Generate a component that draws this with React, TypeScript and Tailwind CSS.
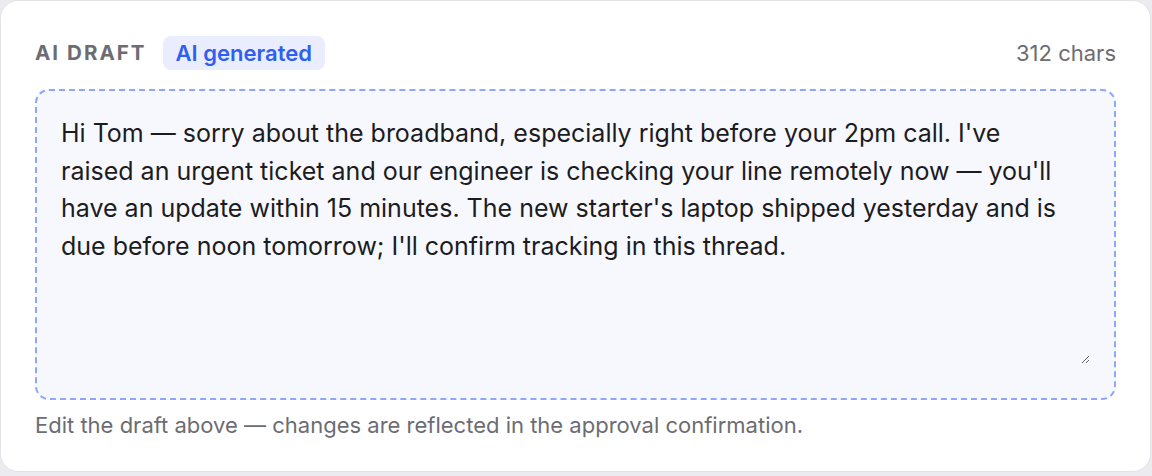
import React from "react";

const draft =
  "Hi Tom — sorry about the broadband, especially right before your 2pm call. I've raised an urgent ticket and our engineer is checking your line remotely now — you'll have an update within 15 minutes. The new starter's laptop shipped yesterday and is due before noon tomorrow; I'll confirm tracking in this thread.";

const App = () => {
  return (
    <div className="min-h-[476px] w-full bg-[#ececf0] font-['Inter','Noto_Sans',sans-serif]">
      <div className="w-[1151px] h-[472px] bg-white border border-[#e2e2e7] rounded-[18px] px-[34px] pt-[35px] flex flex-col">
        {/* header */}
        <div className="flex items-center h-[34px]">
          <span className="text-[20.5px] font-bold tracking-[0.1em] text-[#6c6c72]">AI DRAFT</span>
          <span className="ml-[16px] px-[13px] h-[34px] flex items-center rounded-[8px] bg-[#e9edfd] text-[#2f5ff0] text-[22px] font-semibold">
            AI generated
          </span>
          <span className="ml-auto text-[22px] text-[#6c6c72]">{draft.length} chars</span>
        </div>

        {/* draft box */}
        <div className="mt-[19px] h-[311px] flex flex-col rounded-[14px] border-2 border-dashed border-[#8fa6fb] bg-[#f7f8fd] pl-[24px] pr-[24px] pt-[24px] pb-[34px]">
          <textarea
            defaultValue={draft}
            className="flex-1 w-full bg-transparent pr-[12px] text-[25px] leading-[37.5px] text-[#1c1c1f] outline-none resize-y"
          />
        </div>

        <p className="mt-[10px] text-[22px] leading-[30px] text-[#6c6c72]">
          Edit the draft above — changes are reflected in the approval confirmation.
        </p>
      </div>
    </div>
  );
};

export default App;
